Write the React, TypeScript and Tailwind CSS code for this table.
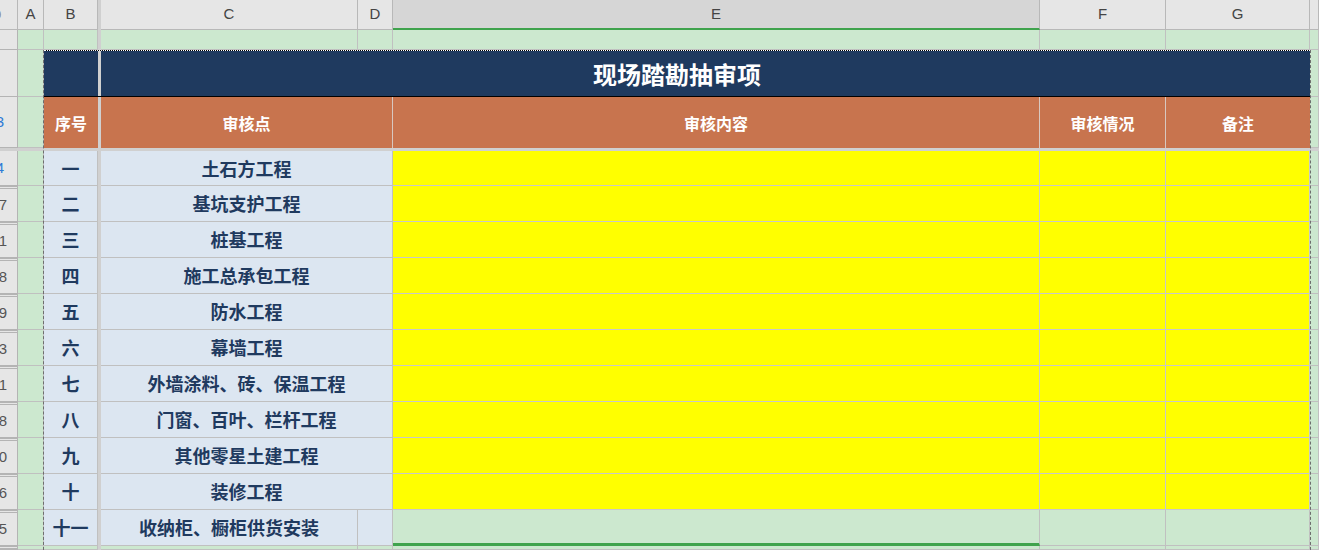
const cjk = { fontFamily: '"Noto Sans CJK SC", "Noto Sans", sans-serif' };
const latin = { fontFamily: '"Liberation Sans", Arial, sans-serif' };

const items = [
  { n: "一", t: "土石方工程", rh: "14", blue: true },
  { n: "二", t: "基坑支护工程", rh: "17" },
  { n: "三", t: "桩基工程", rh: "21" },
  { n: "四", t: "施工总承包工程", rh: "28" },
  { n: "五", t: "防水工程", rh: "29" },
  { n: "六", t: "幕墙工程", rh: "33" },
  { n: "七", t: "外墙涂料、砖、保温工程", rh: "41" },
  { n: "八", t: "门窗、百叶、栏杆工程", rh: "48" },
  { n: "九", t: "其他零星土建工程", rh: "60" },
  { n: "十", t: "装修工程", rh: "66" },
];

function RowHead({ label, blue, double }: { label?: string; blue?: boolean; double?: boolean }) {
  return (
    <div
      className={`flex items-center justify-end overflow-hidden whitespace-nowrap bg-[#e6e6e6] border-r border-b border-[#b4b4b4] text-[15px] ${
        double ? "border-t-[3px] border-double border-t-[#b4b4b4]" : ""
      } ${blue ? "pr-[13px] text-[#2f7bd6]" : "pr-[10px] text-[#555]"}`}
      style={latin}
    >
      {label}
    </div>
  );
}

function Green({ span = "" }: { span?: string }) {
  return <div className={`bg-[#cce8cf] border-r border-b border-[#c0c0c0] ${span}`} />;
}

function Freeze() {
  return <div className="bg-[#d0d0d0]" />;
}

function ColHead({ label, selected }: { label: string; selected?: boolean }) {
  return (
    <div
      className={`flex items-center justify-center border-r border-[#b8b8b8] text-[15px] text-[#444] ${
        selected ? "bg-[#d6d6d6] border-b-2 border-b-[#3fa34d]" : "bg-[#e6e6e6] border-b"
      }`}
      style={latin}
    >
      {label}
    </div>
  );
}

export default function App() {
  return (
    <div className="relative h-[550px] w-[1319px] overflow-hidden bg-[#e6e6e6]">
      <div className="grid h-full grid-cols-[18px_26px_54px_3px_257px_35px_647px_126px_144px_1fr] grid-rows-[30px_20px_47px_51px_3px_35px_repeat(10,36px)_1fr]">
        {/* column headers */}
        <div className="flex items-center overflow-hidden border-r border-b border-[#b8b8b8] bg-[#e6e6e6] text-[13px] text-[#888]" style={latin}>
          <span className="-ml-[6px]">0</span>
        </div>
        <ColHead label="A" />
        <ColHead label="B" />
        <Freeze />
        <ColHead label="C" />
        <ColHead label="D" />
        <ColHead label="E" selected />
        <ColHead label="F" />
        <ColHead label="G" />
        <ColHead label="" />

        {/* row 1 */}
        <RowHead />
        <Green />
        <Green />
        <Freeze />
        <Green />
        <Green />
        <Green />
        <Green />
        <Green />
        <Green />

        {/* title row */}
        <RowHead />
        <Green />
        <div className="relative col-span-7 flex items-center justify-center border-y border-black bg-[#1f3a5f]">
          <div className="absolute top-0 bottom-0 left-[54px] w-[3px] bg-[#d0d0d0]" />
          <span className="text-[24px] font-bold text-white" style={cjk}>
            现场踏勘抽审项
          </span>
        </div>
        <Green />

        {/* header row */}
        <RowHead label="3" blue />
        <Green />
        <div className="flex items-center justify-center bg-[#c8744e] text-[16px] font-bold text-white" style={cjk}>
          序号
        </div>
        <Freeze />
        <div className="col-span-2 flex items-center justify-center border-r border-[#d8c8c0] bg-[#c8744e] text-[16px] font-bold text-white" style={cjk}>
          审核点
        </div>
        <div className="flex items-center justify-center border-r border-[#d8c8c0] bg-[#c8744e] text-[16px] font-bold text-white" style={cjk}>
          审核内容
        </div>
        <div className="flex items-center justify-center border-r border-[#d8c8c0] bg-[#c8744e] text-[16px] font-bold text-white" style={cjk}>
          审核情况
        </div>
        <div className="flex items-center justify-center bg-[#c8744e] text-[16px] font-bold text-white" style={cjk}>
          备注
        </div>
        <Green />

        {/* freeze row */}
        <div className="col-span-full bg-[#d0d0d0]" />

        {items.map((it, i) => (
          <Row key={it.n} {...it} double={i > 0} />
        ))}

        {/* 十一 */}
        <RowHead label="75" double />
        <Green />
        <div className="flex items-center justify-center border-r border-b border-[#c0c0c0] bg-[#dce6f1] text-[18px] font-bold text-[#1f3a5f]" style={cjk}>
          十一
        </div>
        <Freeze />
        <div className="flex items-center justify-center border-r border-b border-[#c0c0c0] bg-[#dce6f1] text-[18px] font-bold text-[#1f3a5f]" style={cjk}>
          收纳柜、橱柜供货安装
        </div>
        <div className="border-r border-b border-[#c0c0c0] bg-[#dce6f1]" />
        <div className="border-r border-[#c0c0c0] border-b-[3px] border-b-[#3fa34d] bg-[#cce8cf]" />
        <Green />
        <Green />
        <Green />

        {/* last partial row */}
        <RowHead double />
        <Green />
        <Green />
        <Freeze />
        <Green />
        <Green />
        <Green />
        <Green />
        <Green />
        <Green />
      </div>

      {/* copy marquee */}
      <div className="pointer-events-none absolute top-[50px] bottom-0 left-[43px] w-[1268px] border-x border-dashed border-[#6e6e6e]" />
      <div className="pointer-events-none absolute top-[50px] left-[44px] w-[1266px] border-t border-dotted border-white" />
    </div>
  );
}

function Row({ n, t, rh, blue, double }: { n: string; t: string; rh: string; blue?: boolean; double?: boolean }) {
  return (
    <>
      <RowHead label={rh} blue={blue} double={double} />
      <Green />
      <div className="flex items-center justify-center border-r border-b border-[#c0c0c0] bg-[#dce6f1] text-[18px] font-bold text-[#1f3a5f]" style={cjk}>
        {n}
      </div>
      <Freeze />
      <div className="col-span-2 flex items-center justify-center border-r border-b border-[#c0c0c0] bg-[#dce6f1] text-[18px] font-bold text-[#1f3a5f]" style={cjk}>
        {t}
      </div>
      <div className="border-r border-b border-[#c8c8c8] bg-[#ffff00]" />
      <div className="border-r border-b border-[#c8c8c8] bg-[#ffff00]" />
      <div className="border-r border-b border-[#c8c8c8] bg-[#ffff00]" />
      <Green />
    </>
  );
}
